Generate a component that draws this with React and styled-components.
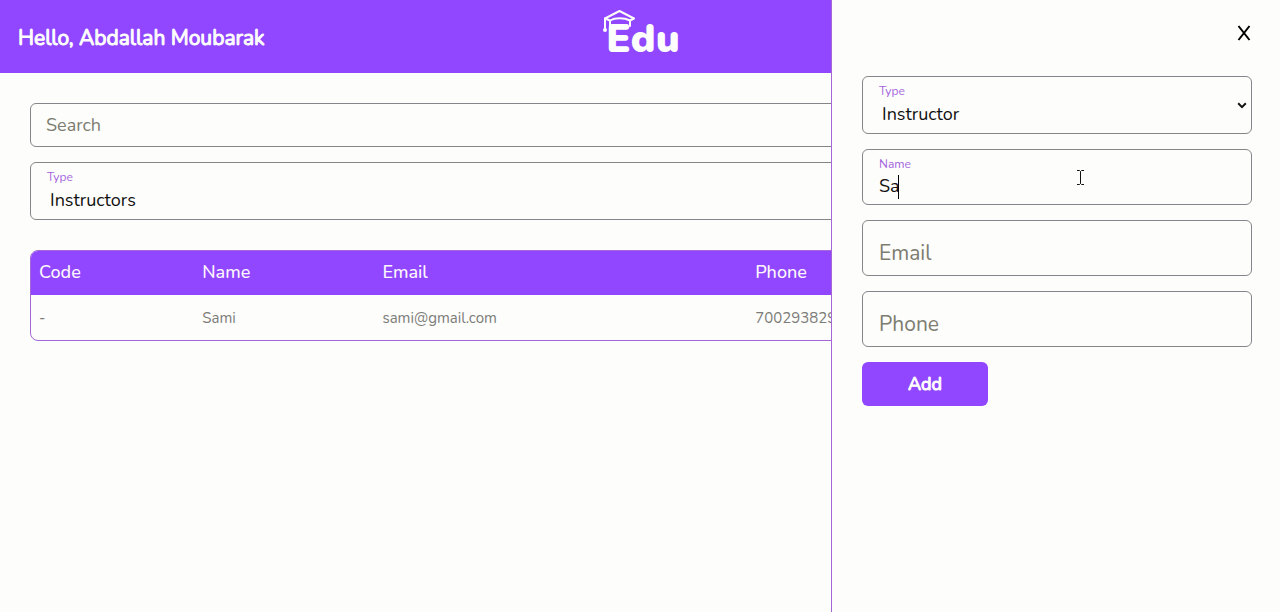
import React, { useState } from "react";
import styled, { createGlobalStyle, css } from "styled-components";

const GlobalStyle = createGlobalStyle`
  *, *::before, *::after { box-sizing: border-box; }
  body {
    margin: 0;
    background: #fdfdfc;
    color: #111;
    font-family: Nunito, Lato, "Open Sans", sans-serif;
    overflow-x: hidden;
  }
  button, input, select { font-family: inherit; }
`;

const thickened = css`
  font-weight: 400;
  -webkit-text-stroke: 1px currentColor;
`;

const Header = styled.header`
  display: grid;
  grid-template-columns: 1fr auto 1fr;
  align-items: center;
  height: 73px;
  padding: 0 18px;
  background: #9147ff;
  color: #fdfdfc;
`;

const Greeting = styled.h1`
  ${thickened}
  margin: 0;
  padding-top: 2px;
  font-size: 21px;
  line-height: 28px;
`;

const Logo = styled.a`
  position: relative;
  display: block;
  padding: 4px 0 0 6px;
  color: inherit;
  text-decoration: none;
  font-size: 40px;
  line-height: 44px;
  font-weight: 900;
`;

const Cap = styled.svg`
  position: absolute;
  left: 2px;
  top: -4px;
  width: 34px;
  height: 24px;
`;

const Main = styled.main`
  display: flex;
  flex-direction: column;
  gap: 30px;
  padding: 30px;
`;

const Stack = styled.div`
  display: flex;
  flex-direction: column;
  align-items: stretch;
  gap: 15px;
`;

const outline = css`
  border: 1px solid #85858a;
  border-radius: 6px;
  background: transparent;
`;

const SearchInput = styled.input`
  ${outline}
  height: 44px;
  padding: 0 15px;
  font-size: 18px;
  outline: none;
  &::placeholder { color: #7c7c70; opacity: 1; }
`;

const Field = styled.div`
  ${outline}
  position: relative;
  display: flex;
  flex-direction: column;
  height: ${(p) => (p.$tall ? 58 : 56)}px;
  padding-top: ${(p) => (p.$plain ? 0 : 6)}px;
`;

const FieldLabel = styled.label`
  padding: 0 16px;
  font-size: 12px;
  line-height: 16px;
  color: #a463dc;
`;

const control = css`
  flex: 1;
  width: 100%;
  min-height: 0;
  border: 0;
  outline: none;
  background: transparent;
  color: #111;
  font-size: 18px;
`;

const TextInput = styled.input`
  ${control}
  padding: ${(p) => (p.$plain ? "12px 16px 0" : "0 16px 4px")};
  &::placeholder { color: #7c7c70; font-size: 21px; opacity: 1; }
`;

const Select = styled.select`
  ${control}
  appearance: none;
  padding: 0 19px 4px;
`;

const Arrow = styled.svg`
  position: absolute;
  right: 4px;
  top: 25px;
  width: 10px;
  height: 7px;
  pointer-events: none;
`;

const Caret = styled.span`
  position: absolute;
  left: 35px;
  top: 25px;
  width: 1px;
  height: 24px;
  background: #000;
`;

const Pointer = styled.svg`
  position: absolute;
  left: 55%;
  top: 19px;
  width: 9px;
  height: 17px;
  pointer-events: none;
`;

const TableFrame = styled.div`
  border: 1px solid #a566d6;
  border-radius: 8px;
  overflow: hidden;
`;

const Table = styled.table`
  width: 100%;
  table-layout: fixed;
  border-collapse: collapse;
  text-align: left;
`;

const Col = styled.col`
  width: ${(p) => p.$width};
`;

const Th = styled.th`
  height: 44px;
  padding: 0 8px 2px;
  background: #9147ff;
  color: #fdf6fc;
  font-size: 18px;
  font-weight: 500;
`;

const Td = styled.td`
  height: 45px;
  padding: 0 8px;
  color: #7c7c78;
  font-size: 15px;
`;

const Drawer = styled.aside`
  position: fixed;
  top: 0;
  right: 0;
  bottom: 0;
  width: calc(35% + 1px);
  padding: 18px 28px 30px 30px;
  border-left: 1px solid #a566d6;
  background: #fdfdfc;
  display: flex;
  flex-direction: column;
  gap: 28px;
`;

const CloseButton = styled.button`
  align-self: flex-end;
  display: flex;
  padding: 7px 0;
  border: 0;
  background: none;
  color: #000;
  svg { display: block; }
`;

const AddButton = styled.button`
  ${thickened}
  align-self: flex-start;
  width: 126px;
  height: 44px;
  border: 0;
  border-radius: 6px;
  background: #9147ff;
  color: #fdfdfc;
  font-size: 18px;
`;

const columns = [
  { title: "Code", value: "-", width: "13.4%" },
  { title: "Name", value: "Sami", width: "14.8%" },
  { title: "Email", value: "sami@gmail.com", width: "30.6%" },
  { title: "Phone", value: "700293829", width: "auto" },
];

function DropArrow() {
  return (
    <Arrow viewBox="0 0 10 7" aria-hidden="true">
      <path d="M1.2 1.3 5 5.1 8.8 1.3" fill="none" stroke="#111" strokeWidth="2" />
    </Arrow>
  );
}

export default function App() {
  const [name, setName] = useState("Sa");

  return (
    <>
      <GlobalStyle />
      <Header>
        <Greeting>Hello, Abdallah Moubarak</Greeting>
        <Logo href="#">
          <Cap viewBox="0 0 34 24" aria-hidden="true">
            <g fill="none" stroke="currentColor" strokeWidth="2" strokeLinejoin="round" strokeLinecap="round">
              <path d="M3 9.500 17.500 2 32 9.500l-4 2C22 8.500 13 8.500 8 11.500Z" />
              <path d="M3 9.500v10M8 11.500v7M28 11.500v5.500" />
            </g>
            <circle cx="3" cy="21" r="2" fill="currentColor" />
          </Cap>
          Edu
        </Logo>
      </Header>

      <Main>
        <Stack>
          <SearchInput type="search" placeholder="Search" aria-label="Search" />
          <Field $tall>
            <FieldLabel htmlFor="list-type">Type</FieldLabel>
            <Select id="list-type" defaultValue="Instructors">
              <option>Instructors</option>
            </Select>
            <DropArrow />
          </Field>
        </Stack>

        <TableFrame>
          <Table>
            <colgroup>
              {columns.map((c) => <Col key={c.title} $width={c.width} />)}
            </colgroup>
            <thead>
              <tr>{columns.map((c) => <Th key={c.title} scope="col">{c.title}</Th>)}</tr>
            </thead>
            <tbody>
              <tr>{columns.map((c) => <Td key={c.title}>{c.value}</Td>)}</tr>
            </tbody>
          </Table>
        </TableFrame>
      </Main>

      <Drawer>
        <CloseButton type="button" aria-label="Close">
          <svg width="16" height="16" viewBox="0 0 16 16" aria-hidden="true">
            <path d="M2.500 1 13.500 15M13.500 1 2.500 15" fill="none" stroke="currentColor" strokeWidth="2" />
          </svg>
        </CloseButton>
        <Stack as="form">
          <Field $tall>
            <FieldLabel htmlFor="new-type">Type</FieldLabel>
            <Select id="new-type" defaultValue="Instructor">
              <option>Instructor</option>
            </Select>
            <DropArrow />
          </Field>
          <Field>
            <FieldLabel htmlFor="new-name">Name</FieldLabel>
            <TextInput id="new-name" value={name} onChange={(e) => setName(e.target.value)} />
            <Caret />
            <Pointer viewBox="0 0 9 17" aria-hidden="true">
              <path d="M1 1.500h2.500l1 1 1-1H8M4.500 2.500v12M1 15.500h2.500l1-1 1 1H8" fill="none" stroke="#111" />
            </Pointer>
          </Field>
          <Field $plain>
            <TextInput $plain type="email" placeholder="Email" aria-label="Email" />
          </Field>
          <Field $plain>
            <TextInput $plain type="tel" placeholder="Phone" aria-label="Phone" />
          </Field>
          <AddButton type="button">Add</AddButton>
        </Stack>
      </Drawer>
    </>
  );
}
